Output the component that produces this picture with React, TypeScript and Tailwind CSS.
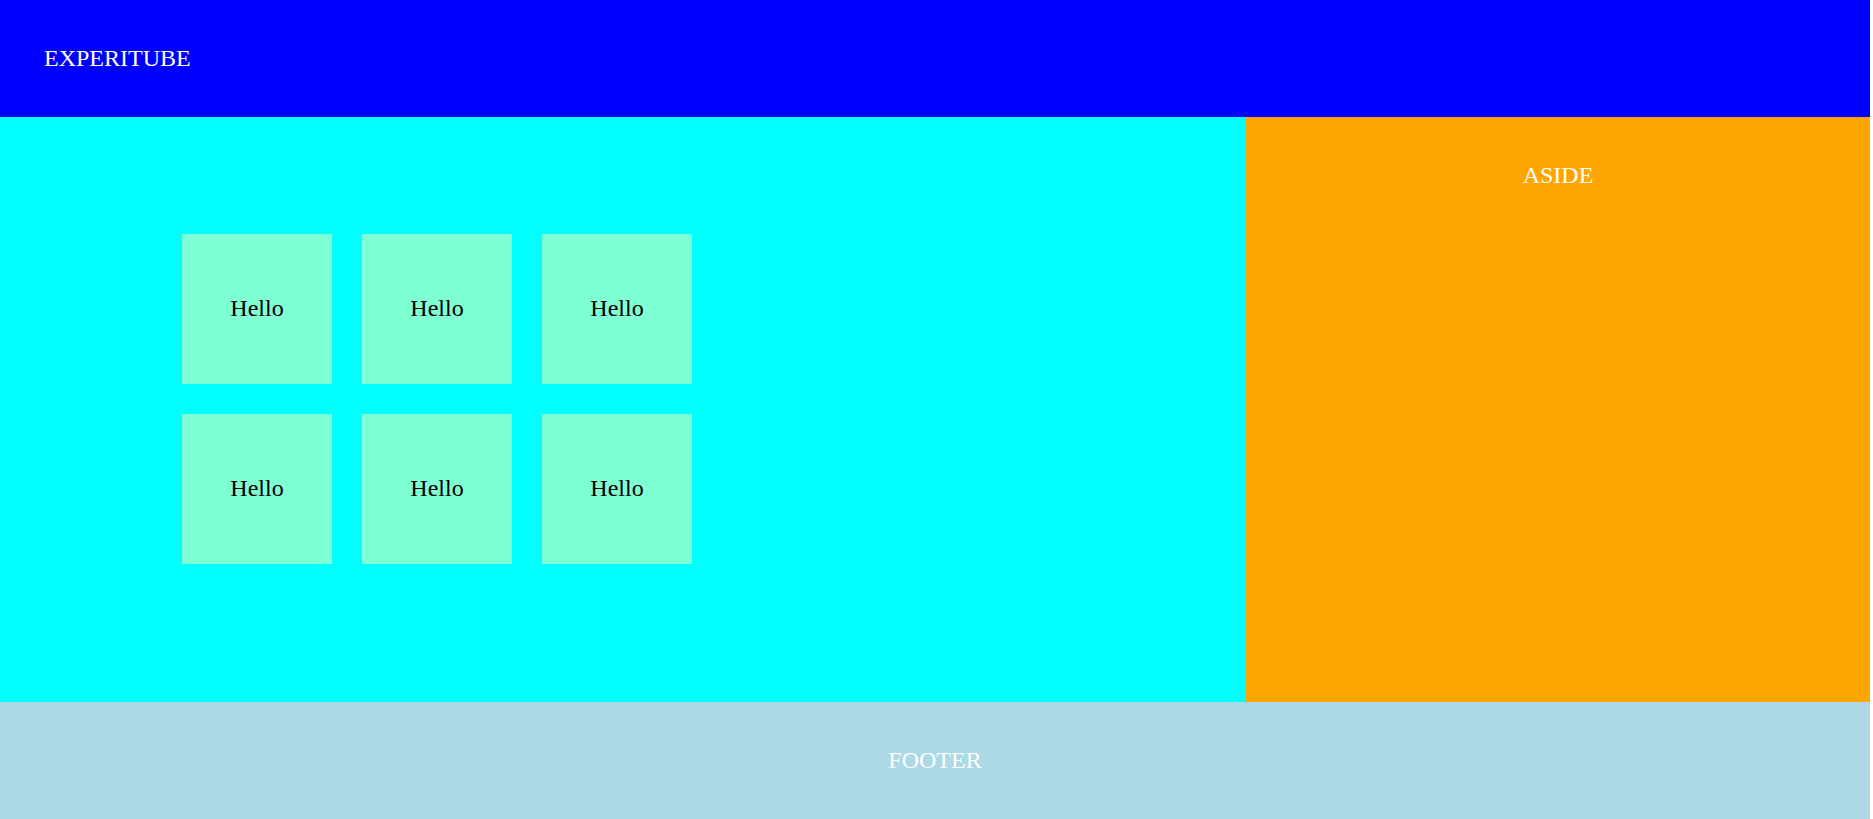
import React from "react";

export default function App() {
  const boxes = Array.from({ length: 6 });
  return (
    <div
      className="grid w-[1870px] h-[819px] grid-cols-[1246px_624px] grid-rows-[117px_585px_117px] text-[24px] text-white"
      style={{ fontFamily: '"Liberation Serif", "Times New Roman", serif' }}
    >
      <header className="col-span-2 bg-[#0000ff] flex items-center pl-[44px] pb-[2px]">
        EXPERITUBE
      </header>
      <main className="bg-[#00ffff] pl-[182px] pt-[117px]">
        <div className="grid grid-cols-[150px_150px_150px] grid-rows-[150px_150px] gap-[30px]">
          {boxes.map((_, i) => (
            <div
              key={i}
              className="bg-[#7fffd4] text-black flex items-center justify-center pb-[2px]"
            >
              Hello
            </div>
          ))}
        </div>
      </main>
      <aside className="bg-[#ffa500] flex justify-center pt-[40px]">
        <span>ASIDE</span>
      </aside>
      <footer className="col-span-2 bg-[#add8e6] flex items-center justify-center pb-[2px]">
        FOOTER
      </footer>
    </div>
  );
}
